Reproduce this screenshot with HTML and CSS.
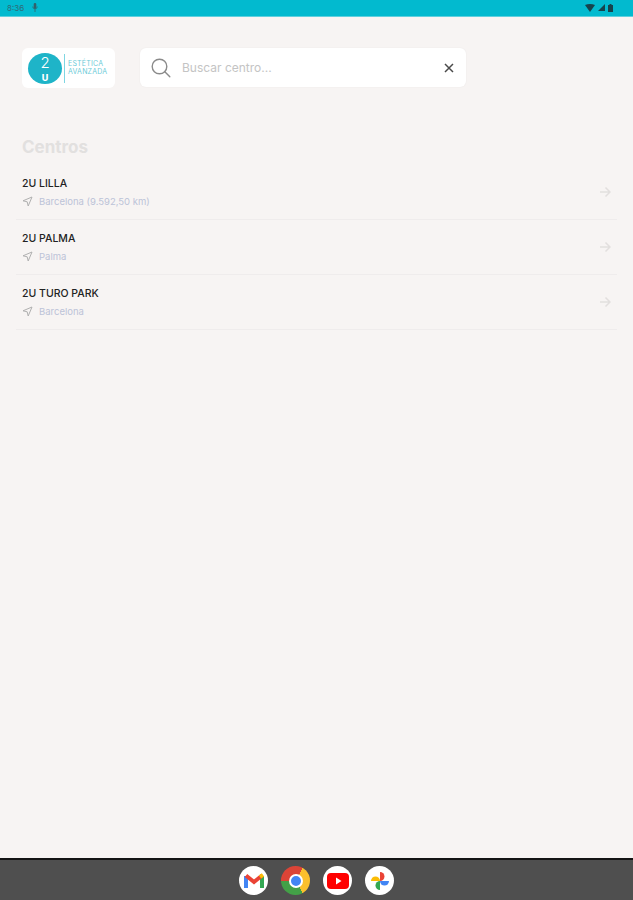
FILE: index.html
```html
<!DOCTYPE html>
<html lang="es">
<head>
  <meta charset="UTF-8">
  <meta name="viewport" content="width=device-width, initial-scale=1.0">
  <title>Centros</title>
  <link rel="stylesheet" href="styles.css">
</head>
<body>
  <div class="status-bar">
    <div class="status-left">
      <span class="status-time">8:36</span>
      <svg class="status-mic" width="6" height="9" viewBox="0 0 6 9"><path d="M3 0c.8 0 1.3.6 1.3 1.3v2.6C4.300 4.600 3.800 5.200 3 5.200s-1.300-.6-1.300-1.300V1.300C1.700.6 2.200 0 3 0zM.4 3.600h.7c0 1.100.9 2 1.900 2s1.900-.9 1.900-2h.7c0 1.300-1 2.400-2.200 2.600V9h-.8V6.200C1.400 6 .4 4.900.4 3.600z" fill="#33606a"/></svg>
    </div>
    <div class="status-right">
      <svg width="10" height="8" viewBox="0 0 10 8"><path d="M0 1c2.900-1.300 7.100-1.300 10 0L5 8z" fill="#17434c"/></svg>
      <svg width="7" height="7" viewBox="0 0 7 7"><path d="M7 0v7H0z" fill="#17434c"/></svg>
      <svg width="5" height="8" viewBox="0 0 5 8"><path d="M1.500 0h2v1H5v7H0V1h1.500z" fill="#17434c"/></svg>
    </div>
  </div>

  <main class="content">
    <header class="top">
      <div class="logo">
        <div class="logo-mark">
          <span class="logo-two">2</span>
          <span class="logo-u">U</span>
        </div>
        <div class="logo-text">
          <span>ESTÉTICA</span>
          <span>AVANZADA</span>
        </div>
      </div>
      <div class="search">
        <svg class="search-icon" width="20" height="20" viewBox="0 0 20 20" fill="none" stroke="#8a8a8a" stroke-width="1.400"><circle cx="8.500" cy="8.500" r="7.300"/><path d="M13.800 13.800l5 5" stroke-linecap="round"/></svg>
        <span class="search-text">Buscar centro...</span>
        <svg class="search-clear" width="10" height="10" viewBox="0 0 10 10" fill="none" stroke="#4a4a4a" stroke-width="1.500"><path d="M1 1l8 8M9 1l-8 8"/></svg>
      </div>
    </header>

    <h1 class="title">Centros</h1>

    <ul class="centers">
      <li class="center">
        <div class="center-info">
          <div class="center-name">2U LILLA</div>
          <div class="center-place">
            <svg width="11" height="11" viewBox="0 0 11 11" fill="none" stroke="#b0b0b0" stroke-width="1" stroke-linejoin="round"><path d="M10 1L1 4.800l4.200 1 1 4.200z"/></svg>
            <span>Barcelona (9.592,50 km)</span>
          </div>
        </div>
        <svg class="center-arrow" width="12" height="12" viewBox="0 0 12 12" fill="none" stroke="#e2dfde" stroke-width="1.500"><path d="M1 6h10M6.500 1.500L11 6l-4.500 4.500"/></svg>
      </li>
      <li class="center">
        <div class="center-info">
          <div class="center-name">2U PALMA</div>
          <div class="center-place">
            <svg width="11" height="11" viewBox="0 0 11 11" fill="none" stroke="#b0b0b0" stroke-width="1" stroke-linejoin="round"><path d="M10 1L1 4.800l4.200 1 1 4.200z"/></svg>
            <span>Palma</span>
          </div>
        </div>
        <svg class="center-arrow" width="12" height="12" viewBox="0 0 12 12" fill="none" stroke="#e2dfde" stroke-width="1.500"><path d="M1 6h10M6.500 1.500L11 6l-4.500 4.500"/></svg>
      </li>
      <li class="center">
        <div class="center-info">
          <div class="center-name">2U TURO PARK</div>
          <div class="center-place">
            <svg width="11" height="11" viewBox="0 0 11 11" fill="none" stroke="#b0b0b0" stroke-width="1" stroke-linejoin="round"><path d="M10 1L1 4.800l4.200 1 1 4.200z"/></svg>
            <span>Barcelona</span>
          </div>
        </div>
        <svg class="center-arrow" width="12" height="12" viewBox="0 0 12 12" fill="none" stroke="#e2dfde" stroke-width="1.500"><path d="M1 6h10M6.500 1.500L11 6l-4.500 4.500"/></svg>
      </li>
    </ul>
  </main>

  <footer class="dock">
    <div class="dock-icon">
      <svg width="20" height="16" viewBox="0 0 20 16" fill="none">
        <path d="M2 15V3" stroke="#4285f4" stroke-width="4"/>
        <path d="M18 15V3" stroke="#34a853" stroke-width="4"/>
        <path d="M2 2.500L10 9l8-6.500" stroke="#ea4335" stroke-width="4"/>
        <path d="M16 4L19 1.800" stroke="#fbbc04" stroke-width="4"/>
      </svg>
    </div>
    <div class="dock-icon chrome">
      <div class="chrome-dot"></div>
    </div>
    <div class="dock-icon">
      <svg width="22" height="16" viewBox="0 0 22 16"><rect width="22" height="16" rx="4" fill="#f00"/><path d="M9 4.500l5.500 3.500L9 11.500z" fill="#fff"/></svg>
    </div>
    <div class="dock-icon">
      <svg width="20" height="20" viewBox="0 0 20 20">
        <path d="M10 10H1a4.500 4.500 0 0 1 9 0z" fill="#fbbc04"/>
        <path d="M10 10V1a4.500 4.500 0 0 1 0 9z" fill="#ea4335"/>
        <path d="M10 10h9a4.500 4.500 0 0 1-9 0z" fill="#4285f4"/>
        <path d="M10 10v9a4.500 4.500 0 0 1 0-9z" fill="#34a853"/>
      </svg>
    </div>
  </footer>
</body>
</html>
```

FILE: styles.css
```css
* {
  box-sizing: border-box;
}

html,
body {
  height: 100%;
}

body {
  margin: 0;
  display: flex;
  flex-direction: column;
  overflow: hidden;
  background: #f7f4f3;
  font-family: Inter, "Liberation Sans", sans-serif;
}

.status-bar {
  flex: none;
  height: 17px;
  padding: 0 20px 1px 7px;
  display: flex;
  align-items: center;
  justify-content: space-between;
  background: #02bacf;
  border-bottom: 1px solid #5fd0de;
}

.status-left {
  display: flex;
  align-items: center;
  gap: 8px;
}

.status-time {
  font-size: 8px;
  color: #2f6b77;
}

.status-right {
  display: flex;
  align-items: center;
  gap: 3px;
}

.content {
  flex: 1;
  padding: 31px 16px 0;
}

.top {
  display: flex;
  align-items: flex-start;
  gap: 25px;
  padding-left: 6px;
}

.logo {
  width: 93px;
  height: 40px;
  padding-left: 6px;
  display: flex;
  align-items: center;
  gap: 2px;
  background: #fff;
  border-radius: 6px;
}

.logo-mark {
  flex: none;
  width: 34px;
  height: 31px;
  display: flex;
  flex-direction: column;
  align-items: center;
  justify-content: center;
  background: #1eb4c8;
  border-radius: 50%;
  color: #fff;
}

.logo-two {
  font-size: 15px;
  font-weight: 300;
  line-height: 18px;
}

.logo-u {
  font-size: 9px;
  font-weight: 800;
  line-height: 11px;
}

.logo-text {
  height: 29px;
  padding-left: 3px;
  display: flex;
  flex-direction: column;
  justify-content: center;
  border-left: 1px solid #7fd6e2;
  font-size: 7px;
  line-height: 8px;
  letter-spacing: .2px;
  color: #6ccbd8;
}

.search {
  width: 326px;
  height: 39px;
  padding: 0 12px 0 11px;
  display: flex;
  align-items: center;
  background: #fff;
  border-radius: 6px;
  box-shadow: 0 0 2px rgba(0, 0, 0, .06);
}

.search-text {
  flex: 1;
  margin-left: 11px;
  font-size: 12px;
  color: #c4c4c4;
}

.title {
  margin: 0;
  padding: 48px 0 0 6px;
  font-size: 17px;
  line-height: 22px;
  font-weight: 700;
  color: #e2e0df;
}

.centers {
  margin: 7px 0 0;
  padding: 0;
  list-style: none;
}

.center {
  height: 55px;
  padding: 12px 6px 0;
  display: flex;
  justify-content: space-between;
  border-bottom: 1px solid #efecec;
}

.center-name {
  font-size: 10.500px;
  line-height: 14px;
  font-weight: 500;
  color: #222;
}

.center-place {
  margin-top: 5px;
  display: flex;
  align-items: center;
  gap: 6px;
  font-size: 9.500px;
  line-height: 11px;
  color: #bcc3d8;
}

.center-arrow {
  margin-top: 9px;
}

.dock {
  flex: none;
  height: 42px;
  display: flex;
  justify-content: center;
  align-items: center;
  gap: 13px;
  padding-top: 1px;
  background: #4f4f4f;
  border-top: 2px solid #141414;
}

.dock-icon {
  width: 29px;
  height: 29px;
  display: flex;
  align-items: center;
  justify-content: center;
  background: #fff;
  border-radius: 50%;
}

.chrome {
  background: conic-gradient(from 30deg, #fbc02d 0 120deg, #43a047 120deg 240deg, #db4437 240deg 360deg);
}

.chrome-dot {
  width: 14px;
  height: 14px;
  background: #4285f4;
  border: 2px solid #fff;
  border-radius: 50%;
}
```
